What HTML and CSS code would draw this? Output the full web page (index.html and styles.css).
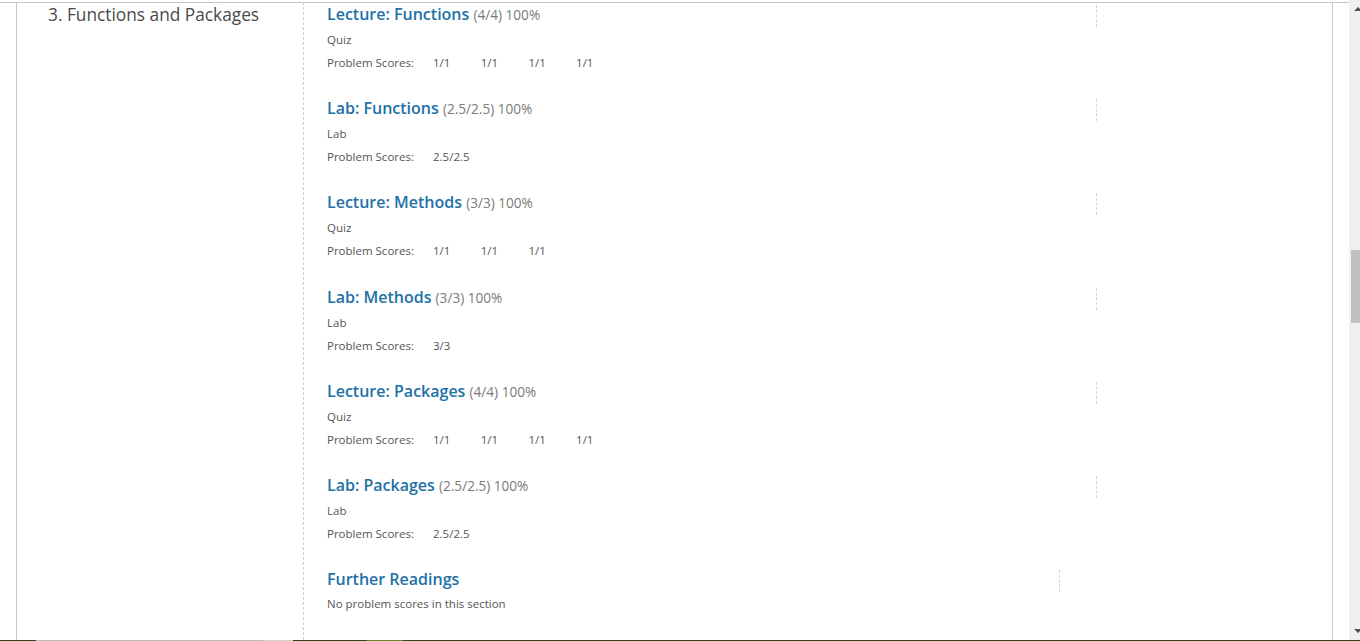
FILE: index.html
```html
<!DOCTYPE html>
<html lang="en">
<head>
<meta charset="utf-8">
<title>Progress</title>
<link rel="stylesheet" href="styles.css">
</head>
<body>
<div class="window">
  <div class="viewport">
    <div class="page">
      <div class="chapter">
        <h2 class="chapter-title">3. Functions and Packages</h2>
        <div class="sections">
          <section class="sec">
            <div class="sec-head">
              <h3 class="sec-title"><a href="#">Lecture: Functions</a> <span class="score">(4/4) 100%</span></h3>
              <span class="marker"></span>
            </div>
            <p class="fmt">Quiz</p>
            <div class="scores"><span class="label">Problem Scores:</span><span class="s">1/1</span><span class="s">1/1</span><span class="s">1/1</span><span class="s">1/1</span></div>
          </section>
          <section class="sec">
            <div class="sec-head">
              <h3 class="sec-title"><a href="#">Lab: Functions</a> <span class="score">(2.5/2.5) 100%</span></h3>
              <span class="marker"></span>
            </div>
            <p class="fmt">Lab</p>
            <div class="scores"><span class="label">Problem Scores:</span><span class="s">2.5/2.5</span></div>
          </section>
          <section class="sec">
            <div class="sec-head">
              <h3 class="sec-title"><a href="#">Lecture: Methods</a> <span class="score">(3/3) 100%</span></h3>
              <span class="marker"></span>
            </div>
            <p class="fmt">Quiz</p>
            <div class="scores"><span class="label">Problem Scores:</span><span class="s">1/1</span><span class="s">1/1</span><span class="s">1/1</span></div>
          </section>
          <section class="sec">
            <div class="sec-head">
              <h3 class="sec-title"><a href="#">Lab: Methods</a> <span class="score">(3/3) 100%</span></h3>
              <span class="marker"></span>
            </div>
            <p class="fmt">Lab</p>
            <div class="scores"><span class="label">Problem Scores:</span><span class="s">3/3</span></div>
          </section>
          <section class="sec">
            <div class="sec-head">
              <h3 class="sec-title"><a href="#">Lecture: Packages</a> <span class="score">(4/4) 100%</span></h3>
              <span class="marker"></span>
            </div>
            <p class="fmt">Quiz</p>
            <div class="scores"><span class="label">Problem Scores:</span><span class="s">1/1</span><span class="s">1/1</span><span class="s">1/1</span><span class="s">1/1</span></div>
          </section>
          <section class="sec">
            <div class="sec-head">
              <h3 class="sec-title"><a href="#">Lab: Packages</a> <span class="score">(2.5/2.5) 100%</span></h3>
              <span class="marker"></span>
            </div>
            <p class="fmt">Lab</p>
            <div class="scores"><span class="label">Problem Scores:</span><span class="s">2.5/2.5</span></div>
          </section>
          <section class="sec">
            <div class="sec-head sec-head-short">
              <h3 class="sec-title"><a href="#">Further Readings</a></h3>
              <span class="marker"></span>
            </div>
            <p class="noscore">No problem scores in this section</p>
          </section>
        </div>
      </div>
    </div>
  </div>
  <div class="scrollbar">
    <div class="sb-inner">
      <div class="sb-up"></div>
      <div class="sb-track"><div class="sb-thumb"></div></div>
      <div class="sb-down"></div>
    </div>
  </div>
</div>
<div class="taskbar">
  <span class="tb tb-dark" style="width:36px"></span>
  <span class="tb tb-gray" style="width:227px"></span>
  <span class="tb tb-light" style="width:30px"></span>
  <span class="tb tb-dark" style="width:74px"></span>
  <span class="tb tb-green" style="width:36px"></span>
  <span class="tb tb-dark tb-fill"></span>
</div>
</body>
</html>
```

FILE: styles.css
```css
* { box-sizing: border-box; }
html, body {
  margin: 0;
  padding: 0;
  background: #fff;
  overflow: hidden;
  height: 641px;
}
body {
  font-family: "Open Sans", "Liberation Sans", sans-serif;
  color: #4a4a4a;
}
.window {
  display: flex;
  height: 640px;
  position: relative;
}
/* top rule */
.window::before {
  content: "";
  position: absolute;
  left: 0;
  right: 11px;
  top: 2px;
  height: 1px;
  background: #c6c6c6;
}
.viewport {
  flex: 1;
  min-width: 0;
  padding-top: 2px;
  overflow: hidden;
}
.page {
  height: 100%;
  margin: 0 16px;
  border-left: 1px solid #c6c6c6;
  border-right: 1px solid #c6c6c6;
}
.chapter {
  display: flex;
  height: 100%;
}
.chapter-title {
  width: 286px;
  flex: none;
  margin: 0;
  padding: 2px 0 0 31px;
  font-size: 17.3px;
  line-height: 22px;
  font-weight: 400;
  color: #4a4a4a;
}
.sections {
  flex: 1;
  border-left: 1px dashed #d0d0d0;
  padding: 0 0 0 23px;
}
.sec {
  height: 94.2px;
}
.sec-head {
  display: flex;
  justify-content: space-between;
  align-items: flex-start;
  width: 770px;
  height: 22px;
  padding-top: 1px;
}
.sec-head-short {
  width: 733px;
}
.sec-title {
  margin: 0;
  font-size: 16px;
  line-height: 22px;
  font-weight: 600;
  white-space: nowrap;
}
.sec-title a {
  color: #2271a6;
  text-decoration: none;
}
.score {
  font-size: 13.6px;
  font-weight: 400;
  color: #7a7a7a;
}
.marker {
  width: 1px;
  height: 22px;
  margin-top: 2px;
  border-left: 1px dashed #d6d6d6;
}
.fmt {
  margin: 8px 0 0 0;
  font-size: 11.5px;
  line-height: 16px;
  color: #555;
}
.scores {
  display: flex;
  margin-top: 7px;
  font-size: 11.5px;
  line-height: 16px;
  color: #555;
}
.label {
  width: 106px;
  flex: none;
}
.s {
  width: 47.7px;
  flex: none;
  white-space: nowrap;
}
.noscore {
  margin: 7px 0 0 0;
  font-size: 11.5px;
  line-height: 16px;
  color: #555;
}
.scrollbar {
  width: 11px;
  flex: none;
  overflow: hidden;
  background: #f0f0f0;
}
.sb-inner {
  width: 17px;
  height: 100%;
  display: flex;
  flex-direction: column;
}
.sb-up, .sb-down {
  height: 17px;
  flex: none;
  position: relative;
}
.sb-up::after {
  content: "";
  position: absolute;
  left: 5px;
  top: 7px;
  border-left: 4px solid transparent;
  border-right: 4px solid transparent;
  border-bottom: 4px solid #505050;
}
.sb-down::after {
  content: "";
  position: absolute;
  left: 5px;
  top: 6px;
  border-left: 4px solid transparent;
  border-right: 4px solid transparent;
  border-top: 4px solid #505050;
}
.sb-track {
  flex: 1;
  padding: 233px 2px 0 2px;
}
.sb-thumb {
  height: 73px;
  background: #c1c1c1;
}
.taskbar {
  display: flex;
  height: 1px;
}
.tb { display: block; height: 1px; }
.tb-dark { background: #34400f; }
.tb-gray { background: #bdbdbd; }
.tb-light { background: #d2d5c8; }
.tb-green { background: #6b8a2a; }
.tb-fill { flex: 1; }
```
